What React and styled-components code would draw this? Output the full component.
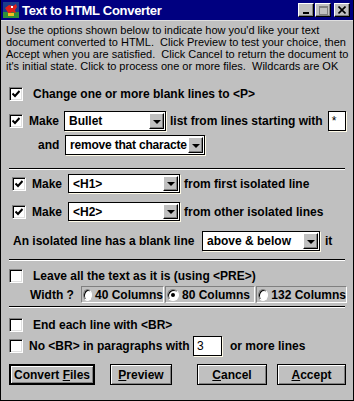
import styled, { createGlobalStyle } from "styled-components";

const GlobalStyle = createGlobalStyle`
  body {
    margin: 0;
    background: #c0c0c0;
  }
`;

const Window = styled.div`
  box-sizing: border-box;
  width: 354px;
  height: 401px;
  display: flex;
  flex-direction: column;
  background: #c0c0c0;
  border: 1px solid #000;
  border-top: none;
  font-family: "Liberation Sans", Arial, sans-serif;
  color: #000;
  overflow: hidden;
`;

const TitleBar = styled.div`
  display: flex;
  align-items: center;
  height: 20px;
  background: #000080;
  padding-left: 2px;
  border-bottom: 1px solid #dfdfdf;
  flex-shrink: 0;
`;

const Title = styled.div`
  flex: 1;
  margin-left: 3px;
  color: #fff;
  font-weight: bold;
  font-size: 13px;
  letter-spacing: -0.3px;
`;

const TitleButtons = styled.div`
  display: flex;
  gap: 1px;
  margin-right: 3px;
`;

const TitleButton = styled.div`
  box-sizing: border-box;
  width: 16px;
  height: 14px;
  margin-left: ${(p) => p.$gap || 0}px;
  background: #c0c0c0;
  border: 1px solid;
  border-color: #fff #000 #000 #fff;
  box-shadow: inset -1px -1px 0 #808080;
  display: flex;
  align-items: center;
  justify-content: center;
`;

const Content = styled.div`
  display: flex;
  flex-direction: column;
  padding: 3px 0 0 0;
`;

const Intro = styled.div`
  padding-left: 5px;
  font-size: 11px;
  line-height: 12px;
  white-space: nowrap;
`;

const Row = styled.div`
  display: flex;
  align-items: center;
  height: ${(p) => p.$h || 14}px;
  margin-top: ${(p) => p.$top || 0}px;
  padding-left: ${(p) => p.$left || 0}px;
  gap: ${(p) => p.$gap ?? 4}px;
`;

const Label = styled.span`
  font-size: 12px;
  font-weight: bold;
  white-space: nowrap;
  flex-shrink: 0;
  width: ${(p) => (p.$w ? `${p.$w}px` : "auto")};
  margin-left: ${(p) => p.$ml || 0}px;
`;

const CheckBox = styled.div`
  box-sizing: border-box;
  width: 14px;
  height: 14px;
  flex-shrink: 0;
  margin-right: 6px;
  background: #fff;
  border: 1px solid;
  border-color: #808080 #fff #fff #808080;
  box-shadow: inset 1px 1px 0 #000, inset -1px -1px 0 #dfdfdf;
  display: flex;
  align-items: center;
  justify-content: center;
`;

const Select = styled.div`
  box-sizing: border-box;
  width: ${(p) => p.$w}px;
  height: ${(p) => p.$h || 20}px;
  flex-shrink: 0;
  background: #fff;
  border: 1px solid #000;
  box-shadow: 1px 1px 0 #fffbe8;
  display: flex;
  align-items: center;
  padding: 1px 1px 1px 4px;
  font-size: 12px;
  font-weight: bold;
  white-space: nowrap;
`;

const SelectText = styled.span`
  flex: 1;
  letter-spacing: ${(p) => (p.$tight ? "-0.2px" : "normal")};
`;

const ArrowButton = styled.div`
  box-sizing: border-box;
  width: 15px;
  height: 100%;
  flex-shrink: 0;
  background: #c0c0c0;
  border: 1px solid;
  border-color: #fff #000 #000 #fff;
  box-shadow: inset -1px -1px 0 #808080;
  display: flex;
  align-items: center;
  justify-content: center;
  &::after {
    content: "";
    border-left: 4px solid transparent;
    border-right: 4px solid transparent;
    border-top: 4px solid #000;
    margin-top: 1px;
  }
`;

const TextBox = styled.div`
  box-sizing: border-box;
  width: ${(p) => p.$w}px;
  height: 20px;
  flex-shrink: 0;
  margin-left: ${(p) => p.$ml || 0}px;
  background: #fff;
  border: 1px solid #000;
  box-shadow: 1px 1px 0 #fffbe8;
  padding: 1px 3px;
  font-size: 12px;
  line-height: 16px;
`;

const Divider = styled.div`
  margin: ${(p) => p.$top}px 8px 0 8px;
  height: 1px;
  background: #000;
  border-bottom: 1px solid #fff;
`;

const RadioFrame = styled.div`
  box-sizing: border-box;
  width: ${(p) => p.$w}px;
  height: 17px;
  flex-shrink: 0;
  border: 1px solid;
  border-color: #808080 #fff #fff #808080;
  display: flex;
  align-items: center;
  padding-left: 1px;
  gap: 3px;
  font-size: 12px;
  font-weight: bold;
  white-space: nowrap;
`;

const RadioDot = styled.div`
  box-sizing: border-box;
  width: 12px;
  height: 12px;
  border-radius: 50%;
  background: #fff;
  border: 1px solid;
  border-color: #808080 #fff #fff #808080;
  box-shadow: inset 1px 1px 0 #000;
  display: flex;
  align-items: center;
  justify-content: center;
  &::after {
    content: "";
    display: ${(p) => (p.$on ? "block" : "none")};
    width: 4px;
    height: 4px;
    border-radius: 50%;
    background: #000;
  }
`;

const ButtonBar = styled.div`
  display: flex;
  margin-top: 8px;
  padding-left: 8px;
`;

const Button = styled.div`
  box-sizing: border-box;
  width: ${(p) => p.$w}px;
  height: 21px;
  margin-left: ${(p) => p.$ml || 0}px;
  background: #c0c0c0;
  border: ${(p) => (p.$primary ? 2 : 1)}px solid #000;
  box-shadow: inset 1px 1px 0 #fff, inset -1px -1px 0 #808080;
  display: flex;
  align-items: center;
  justify-content: center;
  font-size: 12px;
  font-weight: bold;
  white-space: nowrap;
`;

const AppIcon = () => (
  <svg width="16" height="16" viewBox="0 0 16 16">
    <rect width="16" height="16" fill="#1a3d8c" />
    <rect y="10" width="16" height="6" fill="#2f8f3a" />
    <path d="M2 6 L6 3 L10 4 L13 2 L14 5 L12 8 L13 11 L9 10 L6 12 L4 9 Z" fill="#e0201c" />
    <rect x="8" y="4" width="2" height="2" fill="#fff" />
    <rect x="5" y="11" width="6" height="3" fill="#f0c020" />
  </svg>
);

const Check = () => (
  <svg width="8" height="8" viewBox="0 0 8 8">
    <path d="M0.5 3.5 L3 6 L7.5 1" stroke="#000" strokeWidth="2" fill="none" />
  </svg>
);

const Box = ({ checked = true }) => <CheckBox>{checked && <Check />}</CheckBox>;

const Dropdown = ({ w, h, tight, children }) => (
  <Select $w={w} $h={h}>
    <SelectText $tight={tight}>{children}</SelectText>
    <ArrowButton />
  </Select>
);

export default function App() {
  return (
    <>
      <GlobalStyle />
      <Window>
        <TitleBar>
          <AppIcon />
          <Title>Text to HTML Converter</Title>
          <TitleButtons>
            <TitleButton>
              <svg width="8" height="8" viewBox="0 0 8 8">
                <rect x="1" y="6" width="6" height="2" fill="#000" />
              </svg>
            </TitleButton>
            <TitleButton>
              <svg width="9" height="9" viewBox="0 0 9 9">
                <rect x="0.5" y="0.5" width="8" height="8" fill="none" stroke="#808080" />
                <rect x="0.5" y="0.5" width="8" height="1.5" fill="#808080" />
              </svg>
            </TitleButton>
            <TitleButton $gap={2}>
              <svg width="8" height="8" viewBox="0 0 8 8">
                <path d="M0.5 0.5 L7.5 7.5 M7.5 0.5 L0.5 7.5" stroke="#000" strokeWidth="1.6" />
              </svg>
            </TitleButton>
          </TitleButtons>
        </TitleBar>
        <Content>
          <Intro>
            Use the options shown below to indicate how you'd like your text
            <br />
            document converted to HTML.&nbsp; Click Preview to test your choice, then
            <br />
            Accept when you are satisfied.&nbsp; Click Cancel to return the document to
            <br />
            it's initial state. Click to process one or more files.&nbsp; Wildcards are OK
          </Intro>

          <Row $top={15} $left={8}>
            <Box />
            <Label>Change one or more blank lines to &lt;P&gt;</Label>
          </Row>

          <Row $top={10} $left={8} $h={20} $gap={0}>
            <Box />
            <Label $w={35}>Make</Label>
            <Dropdown w={102}>Bullet</Dropdown>
            <Label $ml={4}>list from lines starting with</Label>
            <TextBox $w={18} $ml={5}>*</TextBox>
          </Row>

          <Row $top={4} $left={37} $h={20} $gap={0}>
            <Label $w={27}>and</Label>
            <Dropdown w={140} tight>remove that characte</Dropdown>
          </Row>

          <Divider $top={13} />

          <Row $top={4} $left={11} $h={19} $gap={0}>
            <Box />
            <Label $w={36}>Make</Label>
            <Dropdown w={112} h={19}>&lt;H1&gt;</Dropdown>
            <Label $ml={4}>from first isolated line</Label>
          </Row>

          <Row $top={9} $left={11} $h={19} $gap={0}>
            <Box />
            <Label $w={36}>Make</Label>
            <Dropdown w={112} h={19}>&lt;H2&gt;</Dropdown>
            <Label $ml={4}>from other isolated lines</Label>
          </Row>

          <Row $top={10} $left={12} $h={20} $gap={0}>
            <Label $w={189}>An isolated line has a blank line</Label>
            <Dropdown w={118}>above &amp; below</Dropdown>
            <Label $ml={5}>it</Label>
          </Row>

          <Divider $top={8} />

          <Row $top={8} $left={8}>
            <Box checked={false} />
            <Label>Leave all the text as it is (using &lt;PRE&gt;)</Label>
          </Row>

          <Row $top={3} $left={29} $h={17} $gap={1}>
            <Label $w={50}>Width ?</Label>
            <RadioFrame $w={83}>
              <RadioDot />
              40 Columns
            </RadioFrame>
            <RadioFrame $w={90}>
              <RadioDot $on />
              80 Columns
            </RadioFrame>
            <RadioFrame $w={91}>
              <RadioDot />
              132 Columns
            </RadioFrame>
          </Row>

          <Divider $top={3} />

          <Row $top={10} $left={8}>
            <Box checked={false} />
            <Label>End each line with &lt;BR&gt;</Label>
          </Row>

          <Row $top={4} $left={8} $h={20} $gap={0}>
            <Box checked={false} />
            <Label $w={164}>No &lt;BR&gt; in paragraphs with</Label>
            <TextBox $w={29}>3</TextBox>
            <Label $ml={8}>or more lines</Label>
          </Row>

          <ButtonBar>
            <Button $w={86} $primary>
              Convert&nbsp;<u>F</u>iles
            </Button>
            <Button $w={62} $ml={15}>
              <u>P</u>review
            </Button>
            <Button $w={70} $ml={25}>
              <u>C</u>ancel
            </Button>
            <Button $w={69} $ml={10}>
              <u>A</u>ccept
            </Button>
          </ButtonBar>
        </Content>
      </Window>
    </>
  );
}
